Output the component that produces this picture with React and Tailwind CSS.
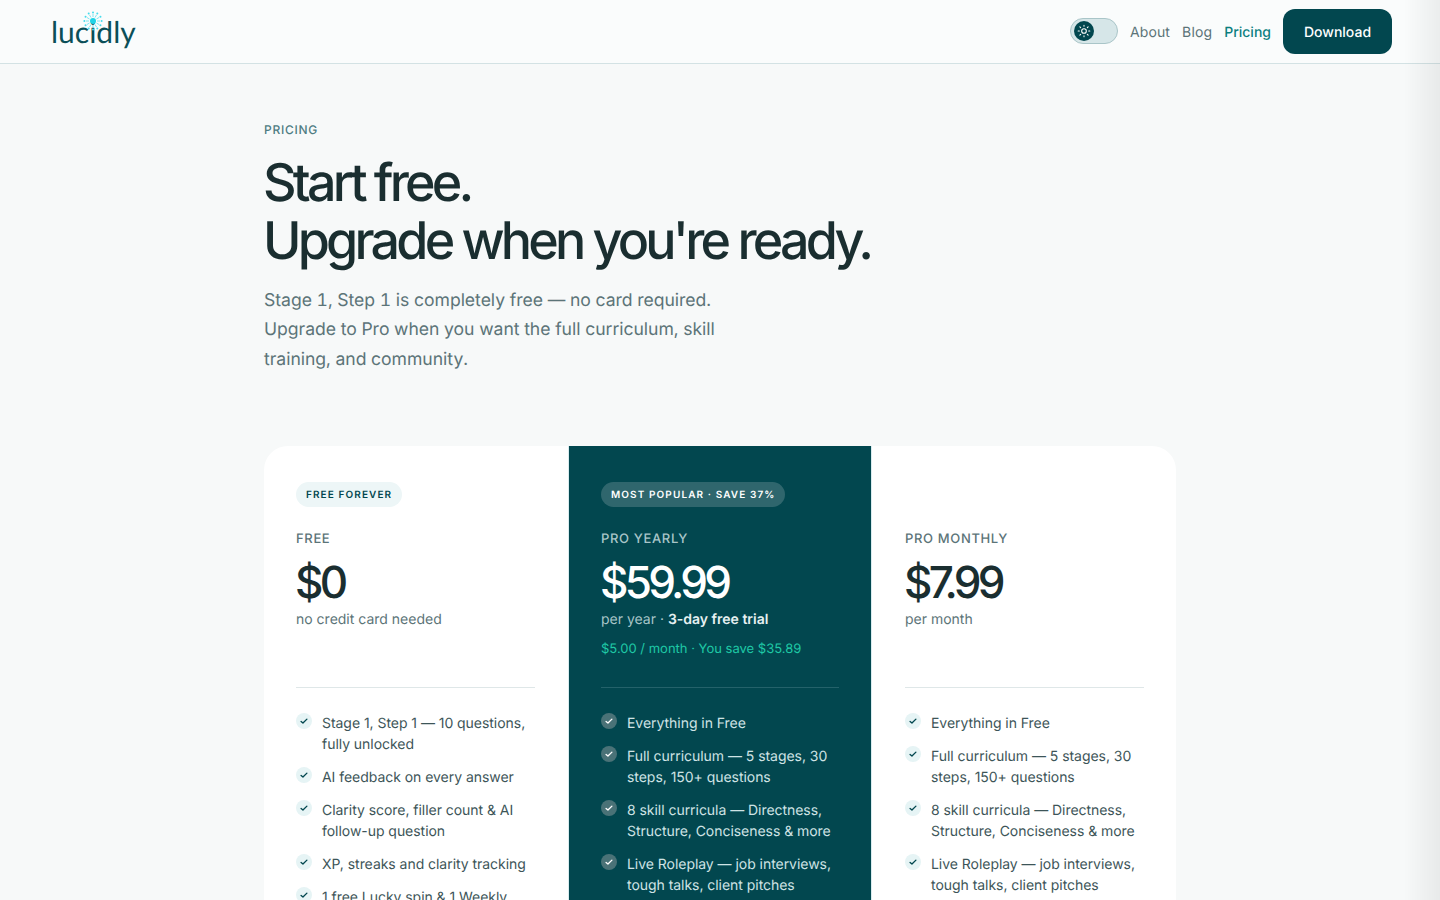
function Check({ inverted }) {
  return (
    <span className={`flex h-4 w-4 shrink-0 items-center justify-center rounded-full ${inverted ? "bg-[#4a7277]" : "bg-[#e6f4f5]"}`}>
      <svg width="10" height="10" viewBox="0 0 24 24" fill="none" stroke={inverted ? "#ffffff" : "#02474f"} strokeWidth="3.2" strokeLinecap="round" strokeLinejoin="round">
        <path d="M5 13l4.5 4L19 7.5" />
      </svg>
    </span>
  );
}

function Feature({ children, inverted }) {
  return (
    <li className={`flex gap-[10px] text-[14px] leading-[21px] tracking-[-0.003em] ${inverted ? "text-[#cfe3e5]" : "text-[#3d5558]"}`}>
      <Check inverted={inverted} />
      <span>{children}</span>
    </li>
  );
}

function Burst() {
  const rays = Array.from({ length: 12 }, (_, i) => (i * Math.PI) / 6);
  return (
    <svg className="absolute left-[31px] top-[10px]" width="22" height="22" viewBox="0 0 22 22">
      <circle cx="11" cy="11" r="3" fill="#1fd3e6" />
      {rays.map((a, i) => (
        <g key={i}>
          <line x1={11 + 4 * Math.cos(a)} y1={11 + 4 * Math.sin(a)} x2={11 + 7 * Math.cos(a)} y2={11 + 7 * Math.sin(a)} stroke="#5fe0ee" strokeWidth="0.8" />
          <circle cx={11 + 8.6 * Math.cos(a)} cy={11 + 8.6 * Math.sin(a)} r="1" fill="#45dcec" />
        </g>
      ))}
    </svg>
  );
}

function Plan({ badge, name, price, sub, extra, inverted, features, pad }) {
  return (
    <div className={`${pad} pt-9 pb-10 ${inverted ? "bg-[#02474f]" : "bg-white"}`}>
      <div className="flex h-[25px]">
        {badge && (
          <span className={`inline-flex items-center rounded-full px-[10px] pt-[2px] text-[10px] font-semibold tracking-[0.11em] ${inverted ? "bg-[#2f666d] text-white" : "bg-[#edf6f7] text-[#02474f]"}`}>
            {badge}
          </span>
        )}
      </div>
      <div className={`mt-[22px] text-[13px] leading-[20px] font-medium tracking-[0.05em] ${inverted ? "text-[#a8c5c8]" : "text-[#5c7478]"}`}>{name}</div>
      <div className={`mt-[8px] -ml-px text-[44px] leading-[50px] font-medium tracking-[-0.085em] ${inverted ? "text-white" : "text-[#1a2e30]"}`}>{price}</div>
      <div className={`mt-[2px] text-[14px] leading-[21px] ${inverted ? "text-[#a8c5c8]" : "text-[#5c7478]"}`}>{sub}</div>
      <div className="mt-[9px] h-[21px] text-[13px] leading-[21px] text-[#1fc9a6]">{extra}</div>
      <div className={`mt-[27px] h-px ${inverted ? "bg-[#24626a]" : "bg-[#dfe7e8]"}`} />
      <ul className="mt-[25px] flex flex-col gap-3">
        {features.map((f) => (
          <Feature key={f} inverted={inverted}>{f}</Feature>
        ))}
      </ul>
    </div>
  );
}

const proFeatures = [
  "Everything in Free",
  "Full curriculum — 5 stages, 30 steps, 150+ questions",
  "8 skill curricula — Directness, Structure, Conciseness & more",
  "Live Roleplay — job interviews, tough talks, client pitches",
  "Unlimited Lucky spins & Weekly challenges",
];

export default function App() {
  return (
    <div className="min-h-screen bg-[#f7f9f9] font-['Inter',sans-serif] text-[#1a2e30] antialiased [text-rendering:geometricPrecision]">
      <nav className="flex h-[64px] items-center justify-between border-b border-[#d3e2e4] bg-[#fafcfc] pl-[51px] pr-[48px]">
        <div className="relative flex h-[64px] items-start">
          <Burst />
          <span className="mt-[10px] font-['Lato',sans-serif] text-[30px] leading-[44px] font-normal text-[#0b4f58]">lucidly</span>
        </div>
        <div className="flex items-center gap-3">
          <button className="-mt-px flex h-[26px] w-[48px] items-center rounded-full border border-[#a9c5c8] bg-[#d6e6e8] pl-[3px]">
            <span className="flex h-5 w-5 items-center justify-center rounded-full bg-[#02474f]">
              <svg width="14" height="14" viewBox="0 0 24 24" fill="none" stroke="#ffffff" strokeWidth="1.8" strokeLinecap="round">
                <circle cx="12" cy="12" r="4" />
                <path d="M12 2v2M12 20v2M4.9 4.9l1.4 1.4M17.7 17.7l1.4 1.4M2 12h2M20 12h2M4.9 19.1l1.4-1.4M17.7 6.3l1.4-1.4" />
              </svg>
            </span>
          </button>
          <a className="pt-px text-[14px] tracking-[0.01em] text-[#5c7478]">About</a>
          <a className="pt-px text-[14px] tracking-[0.01em] text-[#5c7478]">Blog</a>
          <a className="pt-px text-[14px] font-medium text-[#0b7f7f]">Pricing</a>
          <a className="flex h-[45px] w-[109px] items-center justify-center rounded-xl bg-[#02474f] pt-px text-[14px] font-medium text-white">Download</a>
        </div>
      </nav>

      <main className="mx-auto w-[912px] pt-[58px] pb-20">
        <div className="text-[12px] leading-[16px] font-medium tracking-[0.06em] text-[#4e7c82]">PRICING</div>
        <h1 className="mt-[16px] -ml-px text-[52px] leading-[58px] font-medium tracking-[-0.073em] text-[#1a2e30]">
          Start free.
          <br />
          Upgrade when you're ready.
        </h1>
        <p className="mt-[16px] w-[480px] text-[17.6px] leading-[29.4px] tabular-nums tracking-[-0.002em] text-[#5c7478]">
          Stage 1, Step 1 is completely free — no card required. Upgrade to Pro when you want the full curriculum, skill training, and community.
        </p>

        <div className="mt-[71.6px] grid grid-cols-3 overflow-hidden rounded-3xl">
          <Plan
            pad="pl-8 pr-[33px]"
            badge="FREE FOREVER"
            name="FREE"
            price="$0"
            sub="no credit card needed"
            features={[
              "Stage 1, Step 1 — 10 questions, fully unlocked",
              "AI feedback on every answer",
              "Clarity score, filler count & AI follow-up question",
              "XP, streaks and clarity tracking",
              "1 free Lucky spin & 1 Weekly challenge",
            ]}
          />
          <div className="border-x border-[#d9ecef]">
            <Plan
              pad="h-full px-8"
              inverted
              badge="MOST POPULAR · SAVE 37%"
              name="PRO YEARLY"
              price="$59.99"
              sub={<>per year · <strong className="font-semibold text-[#e6f1f2]">3-day free trial</strong></>}
              extra="$5.00 / month · You save $35.89"
              features={proFeatures}
            />
          </div>
          <Plan pad="pl-[33px] pr-8" name="PRO MONTHLY" price="$7.99" sub="per month" features={proFeatures} />
        </div>
      </main>

      <div className="pointer-events-none fixed inset-y-0 right-0 w-[36px] bg-gradient-to-l from-[#0000000f] to-transparent" />
    </div>
  );
}
